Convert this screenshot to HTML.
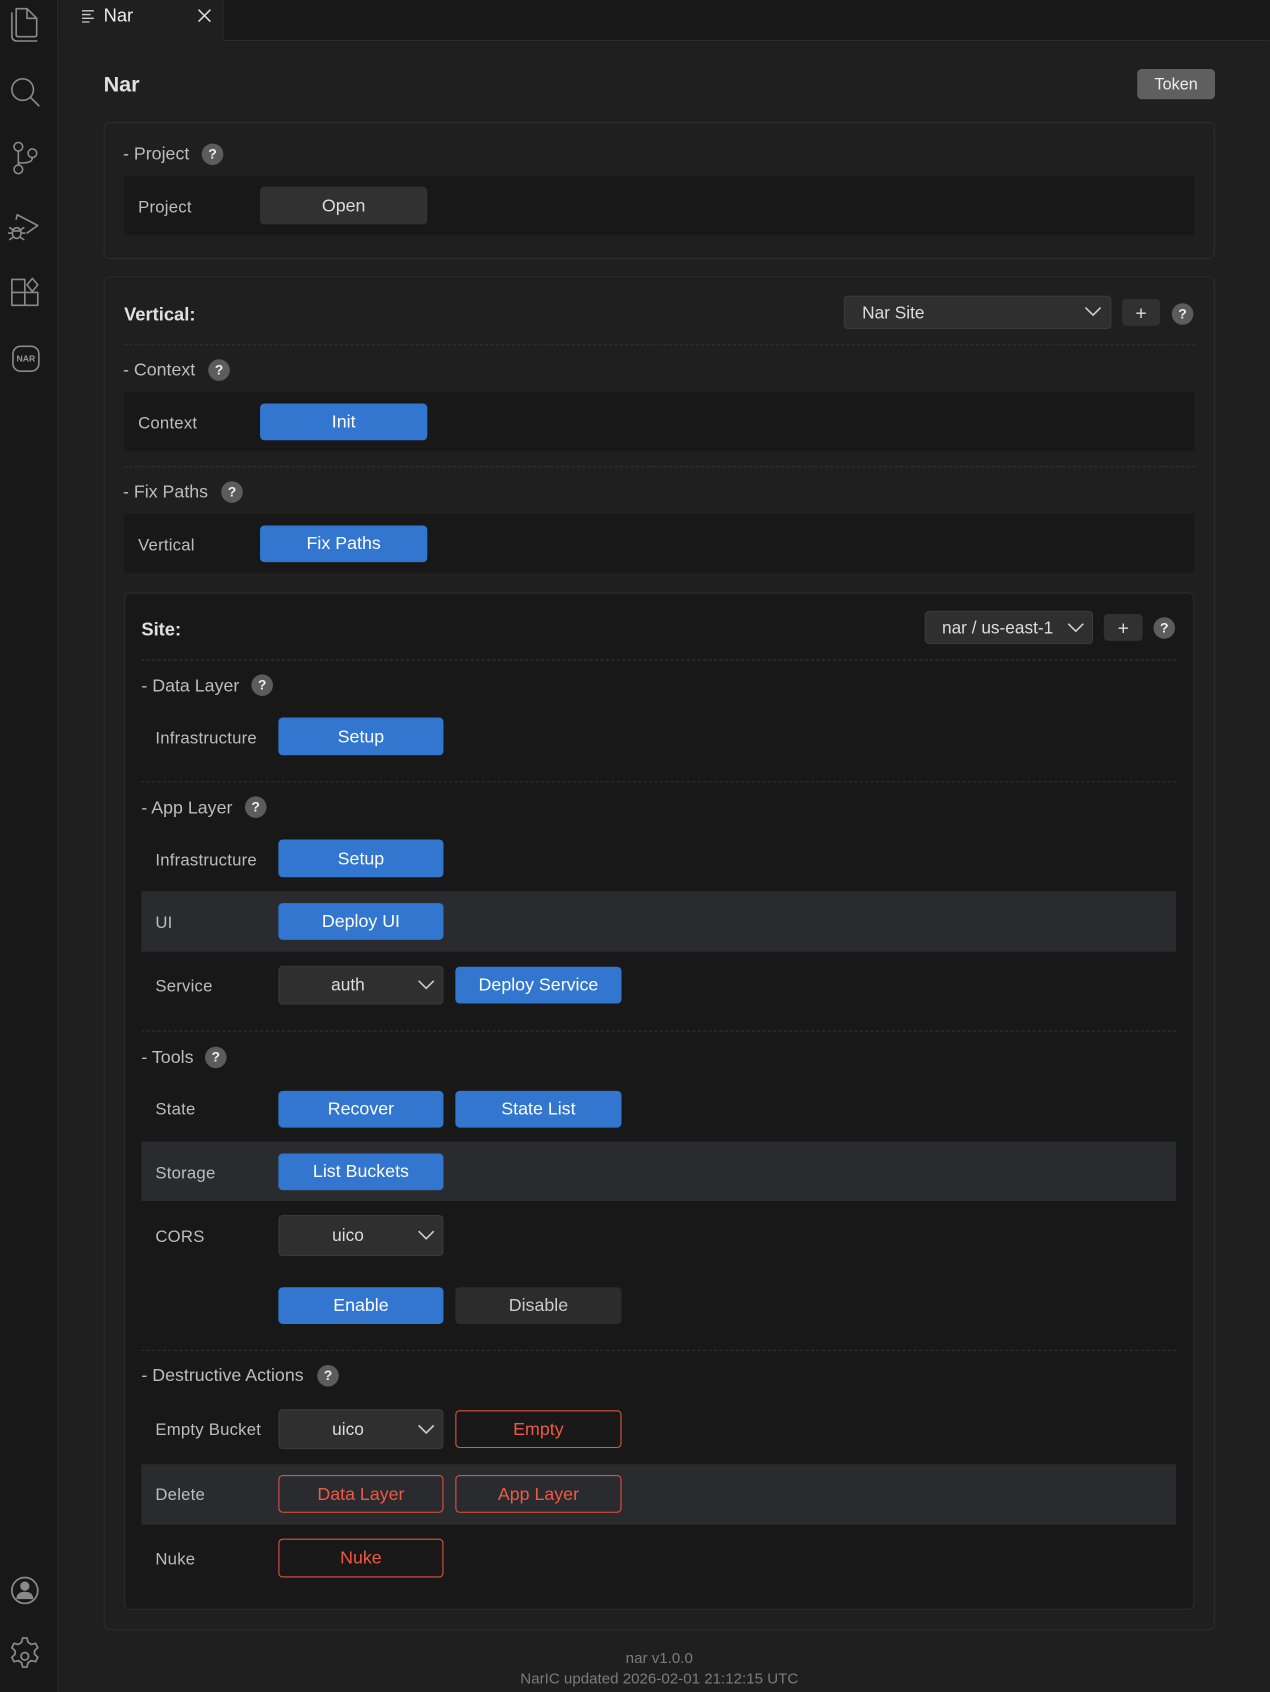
<!DOCTYPE html>
<html><head><meta charset="utf-8"><style>
*{box-sizing:border-box;margin:0;padding:0}
html,body{width:1270px;height:1692px;overflow:hidden;background:#1f1f1f}
#s{position:absolute;left:0;top:0;width:1177px;height:1568px;transform:scale(1.07901);transform-origin:0 0;font-family:"Liberation Sans",Arial,sans-serif;color:#cfcfcf}
.a{position:absolute}
.side{left:0;top:0;width:54px;height:1568px;background:#181818;border-right:1px solid #2b2b2b}
.tabbar{left:54px;top:0;width:1123px;height:38px;background:#181818;border-bottom:1px solid #2b2b2b}
.tab{left:54px;top:0;width:153px;height:38px;background:#1f1f1f;border-right:1px solid #2b2b2b}
.box{border:1px solid #2c2c2c;border-radius:6px}
.row{background:#181818}
.alt{background:#2a2b2e}
.lbl{font-size:15.5px;color:#bdbdbd;letter-spacing:.2px;margin-top:2px}
.sec{font-size:16.5px;color:#bdbdbd;margin-top:2px}
.h{font-size:17px;font-weight:bold;color:#e0e0e0;margin-top:1px}
.q{display:inline-block;width:20px;height:20px;border-radius:50%;background:#5c5c5c;color:#eee;font-size:13px;font-weight:bold;text-align:center;line-height:20px}
.btn{border-radius:4px;font-size:16.5px;text-align:center;display:flex;align-items:center;justify-content:center;padding-top:1px}
.b{background:#3276cf;color:#fff}
.g{background:#313131;color:#ddd}
.r{border:1px solid #e0553f;color:#ee5a45;background:transparent}
.sel{background:#2f2f2f;border:1px solid #3a3a3a;border-radius:4px;color:#ddd;font-size:16px;display:flex;align-items:center;padding-top:2px}
.dash{height:0;border-top:1px dashed #333}
</style></head><body><div id="s">
<div class="a side"></div>
<svg class="a" style="left:0;top:0" width="54" height="360" fill="none" stroke="#8a8a8a" stroke-width="1.5" stroke-linejoin="round" stroke-linecap="round">
<path d="M11 12v21q0 5 5 5h18"/><path d="M15 8h10l9 9v15q0 2-2 2H17q-2 0-2-2z"/><path d="M25 8v9h9"/>
<circle cx="21" cy="83" r="10"/><path d="M28 90l8 8"/>
<circle cx="17" cy="136" r="4"/><circle cx="17" cy="157" r="4"/><circle cx="30" cy="142" r="4"/><path d="M17 140v13"/><path d="M30 146q0 5-9 5h-4"/>
<path d="M15 203l1-4 19 10-10 7"/><ellipse cx="15.5" cy="216" rx="4" ry="5"/><path d="M9 211l3 2M22 211l-3 2M8 216h3M20 216h3M9 222l3-2M22 222l-3-2M11.5 214h8"/>
<path d="M11 259h12v12H11zM11 271h12v12H11zM23 271h12v12H23z"/><path d="M30 258l5 6-5 6-5-6z"/>
<rect x="12" y="321" width="24" height="23" rx="7"/>
</svg>
<div class="a" style="left:12px;top:328px;width:24px;text-align:center;font-size:8px;font-weight:bold;color:#999">NAR</div>
<svg class="a" style="left:0;top:1455px" width="54" height="100" fill="none" stroke="#8a8a8a" stroke-width="1.6">
<circle cx="23" cy="19" r="12"/><circle cx="23" cy="15" r="3.5" fill="#8a8a8a"/><path d="M16 27q0-6 7-6t7 6" fill="#8a8a8a"/>
<path d="M20 67l1-4h4l1 4 3 2 4-1 2 4-3 3v3l3 3-2 4-4-1-3 2-1 4h-4l-1-4-3-2-4 1-2-4 3-3v-3l-3-3 2-4 4 1z" stroke-linejoin="round"/><circle cx="23" cy="80" r="3.5"/>
</svg>
<div class="a tabbar"></div>
<div class="a tab"></div>
<svg class="a" style="left:76px;top:9px" width="12" height="12" stroke="#ccc" stroke-width="1.3"><path d="M0 1h11M0 4.5h8M0 8h11M0 11.5h7"/></svg>
<div class="a" style="left:96px;top:5px;font-size:17px;color:#eee">Nar</div>
<svg class="a" style="left:183px;top:8px" width="13" height="13" stroke="#ddd" stroke-width="1.4"><path d="M1 1l11 11M12 1L1 12"/></svg>

<div class="a h" style="left:96px;top:67px;font-size:20px">Nar</div>
<div class="a btn" style="left:1054px;top:64px;width:72px;height:28px;background:#5f5f5f;color:#eee;font-size:15px">Token</div>

<div class="a box" style="left:96px;top:113px;width:1030px;height:127px"></div>
<div class="a sec" style="left:114px;top:132px">- Project</div><div class="a q" style="left:187px;top:133px">?</div>
<div class="a row" style="left:115px;top:163px;width:992px;height:55px"></div>
<div class="a lbl" style="left:128px;top:182px">Project</div>
<div class="a btn g" style="left:241px;top:173px;width:155px;height:35px">Open</div>

<div class="a box" style="left:96px;top:256px;width:1030px;height:1255px"></div>
<div class="a h" style="left:115px;top:281px">Vertical:</div>
<div class="a sel" style="left:782px;top:274px;width:248px;height:31px;padding-left:16px">Nar Site</div>
<svg class="a" style="left:1005px;top:284px" width="16" height="10" fill="none" stroke="#ccc" stroke-width="1.5"><path d="M1 1l7 7 7-7"/></svg>
<div class="a btn g" style="left:1040px;top:277px;width:35px;height:25px;font-size:18px">+</div>
<div class="a q" style="left:1086px;top:281px">?</div>
<div class="a dash" style="left:115px;top:319px;width:992px"></div>
<div class="a sec" style="left:114px;top:332px">- Context</div><div class="a q" style="left:193px;top:333px">?</div>
<div class="a row" style="left:115px;top:363px;width:992px;height:55px"></div>
<div class="a lbl" style="left:128px;top:382px">Context</div>
<div class="a btn b" style="left:241px;top:374px;width:155px;height:34px">Init</div>
<div class="a dash" style="left:115px;top:432px;width:992px"></div>
<div class="a sec" style="left:114px;top:445px">- Fix Paths</div><div class="a q" style="left:205px;top:446px">?</div>
<div class="a row" style="left:115px;top:476px;width:992px;height:55px"></div>
<div class="a lbl" style="left:128px;top:495px">Vertical</div>
<div class="a btn b" style="left:241px;top:487px;width:155px;height:34px">Fix Paths</div>

<div class="a box" style="left:115px;top:549px;width:992px;height:943px;background:#181818"></div>
<div class="a h" style="left:131px;top:573px">Site:</div>
<div class="a sel" style="left:857px;top:566px;width:156px;height:31px;padding-left:15px">nar / us-east-1</div>
<svg class="a" style="left:989px;top:577px" width="16" height="10" fill="none" stroke="#ccc" stroke-width="1.5"><path d="M1 1l7 7 7-7"/></svg>
<div class="a btn g" style="left:1023px;top:569px;width:36px;height:25px;font-size:18px">+</div>
<div class="a q" style="left:1069px;top:572px">?</div>
<div class="a dash" style="left:131px;top:611px;width:959px"></div>

<div class="a sec" style="left:131px;top:625px">- Data Layer</div><div class="a q" style="left:233px;top:625px">?</div>
<div class="a lbl" style="left:144px;top:674px">Infrastructure</div>
<div class="a btn b" style="left:258px;top:665px;width:153px;height:35px">Setup</div>
<div class="a dash" style="left:131px;top:724px;width:959px"></div>

<div class="a sec" style="left:131px;top:738px">- App Layer</div><div class="a q" style="left:227px;top:738px">?</div>
<div class="a lbl" style="left:144px;top:787px">Infrastructure</div>
<div class="a btn b" style="left:258px;top:778px;width:153px;height:35px">Setup</div>
<div class="a alt" style="left:131px;top:826px;width:959px;height:56px"></div>
<div class="a lbl" style="left:144px;top:845px">UI</div>
<div class="a btn b" style="left:258px;top:837px;width:153px;height:34px">Deploy UI</div>
<div class="a lbl" style="left:144px;top:904px">Service</div>
<div class="a sel" style="left:258px;top:895px;width:153px;height:36px;justify-content:center;padding-right:24px">auth</div>
<svg class="a" style="left:387px;top:908px" width="16" height="10" fill="none" stroke="#ccc" stroke-width="1.5"><path d="M1 1l7 7 7-7"/></svg>
<div class="a btn b" style="left:422px;top:896px;width:154px;height:34px">Deploy Service</div>
<div class="a dash" style="left:131px;top:955px;width:959px"></div>

<div class="a sec" style="left:131px;top:969px">- Tools</div><div class="a q" style="left:190px;top:970px">?</div>
<div class="a lbl" style="left:144px;top:1018px">State</div>
<div class="a btn b" style="left:258px;top:1011px;width:153px;height:34px">Recover</div>
<div class="a btn b" style="left:422px;top:1011px;width:154px;height:34px">State List</div>
<div class="a alt" style="left:131px;top:1058px;width:959px;height:55px"></div>
<div class="a lbl" style="left:144px;top:1077px">Storage</div>
<div class="a btn b" style="left:258px;top:1069px;width:153px;height:34px">List Buckets</div>
<div class="a lbl" style="left:144px;top:1136px">CORS</div>
<div class="a sel" style="left:258px;top:1126px;width:153px;height:38px;justify-content:center;padding-right:24px">uico</div>
<svg class="a" style="left:387px;top:1140px" width="16" height="10" fill="none" stroke="#ccc" stroke-width="1.5"><path d="M1 1l7 7 7-7"/></svg>
<div class="a btn b" style="left:258px;top:1193px;width:153px;height:34px">Enable</div>
<div class="a btn g" style="left:422px;top:1193px;width:154px;height:34px;background:#2c2c2c;color:#ccc">Disable</div>
<div class="a dash" style="left:131px;top:1251px;width:959px"></div>

<div class="a sec" style="left:131px;top:1264px">- Destructive Actions</div><div class="a q" style="left:294px;top:1265px">?</div>
<div class="a lbl" style="left:144px;top:1315px">Empty Bucket</div>
<div class="a sel" style="left:258px;top:1306px;width:153px;height:37px;justify-content:center;padding-right:24px">uico</div>
<svg class="a" style="left:387px;top:1320px" width="16" height="10" fill="none" stroke="#ccc" stroke-width="1.5"><path d="M1 1l7 7 7-7"/></svg>
<div class="a btn r" style="left:422px;top:1307px;width:154px;height:35px">Empty</div>
<div class="a alt" style="left:131px;top:1357px;width:959px;height:56px"></div>
<div class="a lbl" style="left:144px;top:1375px">Delete</div>
<div class="a btn r" style="left:258px;top:1367px;width:153px;height:35px">Data Layer</div>
<div class="a btn r" style="left:422px;top:1367px;width:154px;height:35px">App Layer</div>
<div class="a lbl" style="left:144px;top:1435px">Nuke</div>
<div class="a btn r" style="left:258px;top:1426px;width:153px;height:36px">Nuke</div>

<div class="a" style="left:311px;top:1527px;width:600px;text-align:center;font-size:14px;color:#7c7c7c;line-height:19px">nar v1.0.0<br>NarIC updated 2026-02-01 21:12:15 UTC</div>
</div></body></html>
